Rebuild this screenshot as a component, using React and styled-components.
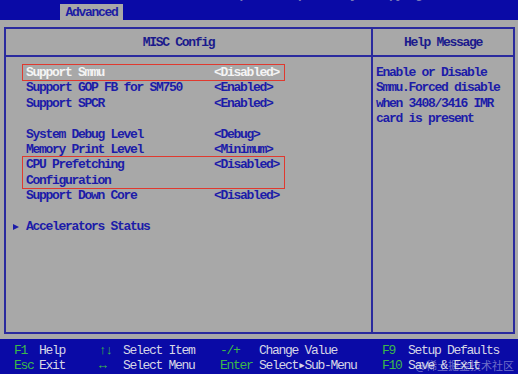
import React from "react";
import styled, { createGlobalStyle } from "styled-components";

const GlobalStyle = createGlobalStyle`
  html, body {
    margin: 0;
    padding: 0;
    background: #0a0aa6;
  }
  body {
    width: 518px;
    height: 374px;
    overflow: hidden;
  }
`;

const items = [
  { label: "Support Smmu", value: "<Disabled>", selected: true, marked: true },
  { label: "Support GOP FB for SM750", value: "<Enabled>" },
  { label: "Support SPCR", value: "<Enabled>" },
  { gap: true },
  { label: "System Debug Level", value: "<Debug>" },
  { label: "Memory Print Level", value: "<Minimum>" },
  { label: "CPU Prefetching Configuration", value: "<Disabled>", marked: true },
  { label: "Support Down Core", value: "<Disabled>" },
  { gap: true },
];

const helpLines = [
  "Enable or Disable",
  "Smmu.Forced disable",
  "when 3408/3416 IMR",
  "card is present",
];

const keys = [
  ["F1", "Help", "\u2191\u2193", "Select Item", "-/+", "Change Value", "F9", "Setup Defaults"],
  ["Esc", "Exit", "\u2194", "Select Menu", "Enter", "Select\u25B8Sub-Menu", "F10", "Save & Exit"],
];

const App = () => {
  return (
    <>
      <GlobalStyle />
      <Screen>
        <TopBar>
          <Tab>Advanced</Tab>
          <Title>Aptio Setup Utility - Copyright</Title>
        </TopBar>
        <Body>
          <Frame>
            <PanelHead>MISC Config</PanelHead>
            <PanelHead $side>Help Message</PanelHead>
            <ItemList>
              {items.map((it, i) =>
                it.gap ? (
                  <Gap key={i} />
                ) : (
                  <Row key={i} $marked={it.marked} $selected={it.selected}>
                    <Label>{it.label}</Label>
                    <Value>{it.value}</Value>
                  </Row>
                )
              )}
              <SubMenu>
                <Arrow />
                <span>Accelerators Status</span>
              </SubMenu>
            </ItemList>
            <HelpText>
              {helpLines.map((l) => (
                <div key={l}>{l}</div>
              ))}
            </HelpText>
          </Frame>
        </Body>
        <KeyBar>
          {keys.map((line) =>
            line.map((t, j) =>
              j % 2 === 0 ? <Key key={t}>{t}</Key> : <Desc key={t}>{t}</Desc>
            )
          )}
        </KeyBar>
        <Watermark>@稀土掘金技术社区</Watermark>
      </Screen>
    </>
  );
};

const mono = `
  font-family: "Liberation Mono", "DejaVu Sans Mono", monospace;
  font-size: 13px;
  font-weight: bold;
  letter-spacing: -1.3px;
  line-height: 15.4px;
  white-space: pre;
`;

const Screen = styled.div`
  position: relative;
  width: 518px;
  height: 374px;
  display: flex;
  flex-direction: column;
  overflow: hidden;
  ${mono}
`;

const TopBar = styled.div`
  height: 20px;
  background: #0a0aa6;
  display: flex;
  align-items: flex-end;
  padding-left: 60px;
  overflow: hidden;
`;

const Tab = styled.div`
  width: 63px;
  height: 16px;
  line-height: 17px;
  background: #a8a8a8;
  color: #1c1ca4;
  text-align: center;
`;

const Title = styled.div`
  align-self: flex-start;
  margin: -13px 0 0 110px;
  color: #7878b8;
`;

const Body = styled.div`
  flex: 1;
  background: #a8a8a8;
  padding: 7px 3px 5px 4px;
  display: flex;
`;

const Frame = styled.div`
  flex: 1;
  border: 2px solid #2a2a9e;
  display: grid;
  grid-template-columns: 365px 1fr;
  grid-template-rows: 28px 1fr;
`;

const PanelHead = styled.div`
  border-bottom: 2px solid #2a2a9e;
  ${(p) => (p.$side ? "border-left: 2px solid #2a2a9e;" : "padding-right: 20px;")}
  color: #1a1a8c;
  display: flex;
  align-items: center;
  justify-content: center;
  padding-top: 2px;
`;

const ItemList = styled.div`
  padding: 8px 0 0 17px;
  display: flex;
  flex-direction: column;
  align-items: flex-start;
`;

const Row = styled.div`
  width: 258px;
  padding-left: 3px;
  display: grid;
  grid-template-columns: 188px auto;
  color: ${(p) => (p.$selected ? "#f4f4f4" : "#1c1ca8")};
  outline: ${(p) => (p.$marked ? "1px solid #e0392f" : "none")};
  outline-offset: 0;
`;

const Label = styled.span`
  white-space: normal;
  width: 176px;
`;

const Value = styled.span``;

const Gap = styled.div`
  height: 15.4px;
`;

const SubMenu = styled.div`
  margin-left: -10px;
  display: flex;
  align-items: center;
  gap: 7px;
  color: #1c1ca8;
`;

const Arrow = styled.span`
  width: 0;
  height: 0;
  border-left: 6px solid #1c1ca8;
  border-top: 3.5px solid transparent;
  border-bottom: 3.5px solid transparent;
`;

const HelpText = styled.div`
  border-left: 2px solid #2a2a9e;
  padding: 8px 0 0 3px;
  color: #1c1ca8;
`;

const KeyBar = styled.div`
  height: 35px;
  background: #0a0aa6;
  padding: 4px 0 0 14px;
  box-sizing: border-box;
  display: grid;
  grid-template-columns: 25px 60px 24px 97px 39px 123px 26px auto;
  grid-auto-rows: 15.4px;
  font-weight: normal;
`;

const Key = styled.span`
  color: #3cb84a;
`;

const Desc = styled.span`
  color: #d6d6e6;
`;

const Watermark = styled.div`
  position: absolute;
  right: 4px;
  bottom: 2px;
  font-family: "Noto Sans CJK SC", sans-serif;
  font-size: 11px;
  line-height: 14px;
  letter-spacing: 0;
  font-weight: normal;
  color: rgba(235, 235, 245, 0.45);
`;

export default App;
